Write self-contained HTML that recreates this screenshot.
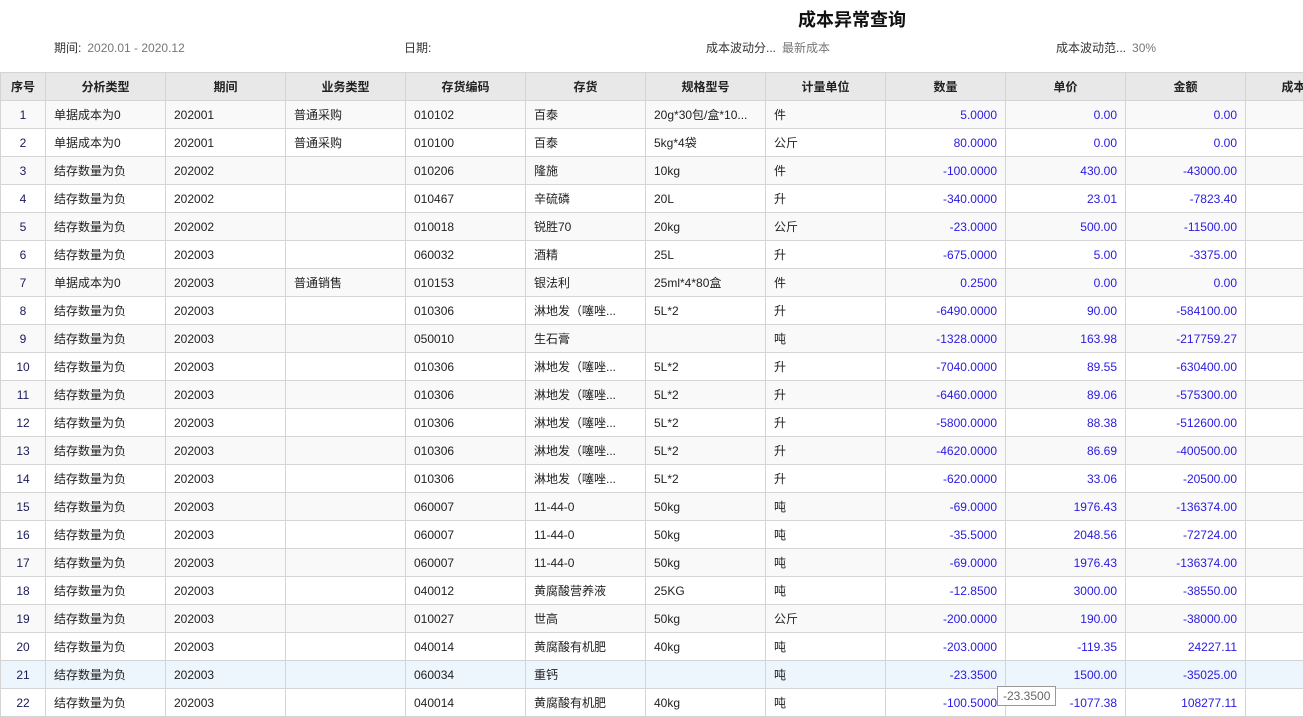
<!DOCTYPE html>
<html><head><meta charset="utf-8"><style>
body{margin:0;width:1303px;height:706px;overflow:hidden;background:#fff;font-family:"Liberation Sans","Noto Sans CJK SC",sans-serif;font-size:12px;color:#222;position:relative}
.t{position:absolute;left:798px;top:6px;font-size:18px;font-weight:bold;color:#111}
.f{position:absolute;top:39px;font-size:12px;color:#333}
.f span{color:#777;margin-left:6px}
table{position:absolute;left:0;top:72px;border-collapse:collapse;table-layout:fixed;width:1365px}
td,th{border:1px solid #d4d4d4;height:27px;padding:0 8px;white-space:nowrap;overflow:hidden;text-overflow:ellipsis}
th{background:#e8e8e8;font-weight:bold;font-size:12px;color:#222}
tr:nth-child(even) td{background:#f9f9f9}
tr.h td{background:#edf5fd!important}
td.c{text-align:center;padding:0;color:#1a1a5a}
td.n{text-align:right;color:#2a1ae0}
.tip{position:absolute;left:997px;top:686px;border:1px solid #999;background:#fff;color:#666;padding:2px 5px;font-size:12px}
</style></head><body>
<div class="t">成本异常查询</div>
<div class="f" style="left:54px">期间:<span>2020.01 - 2020.12</span></div>
<div class="f" style="left:404px">日期:</div>
<div class="f" style="left:706px">成本波动分...<span>最新成本</span></div>
<div class="f" style="left:1056px">成本波动范...<span>30%</span></div>
<table>
<colgroup><col style="width:45px"><col style="width:120px"><col style="width:120px"><col style="width:120px"><col style="width:120px"><col style="width:120px"><col style="width:120px"><col style="width:120px"><col style="width:120px"><col style="width:120px"><col style="width:120px"><col style="width:120px"></colgroup>
<tr><th>序号</th><th>分析类型</th><th>期间</th><th>业务类型</th><th>存货编码</th><th>存货</th><th>规格型号</th><th>计量单位</th><th>数量</th><th>单价</th><th>金额</th><th>成本波动</th></tr>
<tr><td class="c">1</td><td>单据成本为0</td><td>202001</td><td>普通采购</td><td>010102</td><td>百泰</td><td>20g*30包/盒*10...</td><td>件</td><td class="n">5.0000</td><td class="n">0.00</td><td class="n">0.00</td><td></td></tr>
<tr><td class="c">2</td><td>单据成本为0</td><td>202001</td><td>普通采购</td><td>010100</td><td>百泰</td><td>5kg*4袋</td><td>公斤</td><td class="n">80.0000</td><td class="n">0.00</td><td class="n">0.00</td><td></td></tr>
<tr><td class="c">3</td><td>结存数量为负</td><td>202002</td><td></td><td>010206</td><td>隆施</td><td>10kg</td><td>件</td><td class="n">-100.0000</td><td class="n">430.00</td><td class="n">-43000.00</td><td></td></tr>
<tr><td class="c">4</td><td>结存数量为负</td><td>202002</td><td></td><td>010467</td><td>辛硫磷</td><td>20L</td><td>升</td><td class="n">-340.0000</td><td class="n">23.01</td><td class="n">-7823.40</td><td></td></tr>
<tr><td class="c">5</td><td>结存数量为负</td><td>202002</td><td></td><td>010018</td><td>锐胜70</td><td>20kg</td><td>公斤</td><td class="n">-23.0000</td><td class="n">500.00</td><td class="n">-11500.00</td><td></td></tr>
<tr><td class="c">6</td><td>结存数量为负</td><td>202003</td><td></td><td>060032</td><td>酒精</td><td>25L</td><td>升</td><td class="n">-675.0000</td><td class="n">5.00</td><td class="n">-3375.00</td><td></td></tr>
<tr><td class="c">7</td><td>单据成本为0</td><td>202003</td><td>普通销售</td><td>010153</td><td>银法利</td><td>25ml*4*80盒</td><td>件</td><td class="n">0.2500</td><td class="n">0.00</td><td class="n">0.00</td><td></td></tr>
<tr><td class="c">8</td><td>结存数量为负</td><td>202003</td><td></td><td>010306</td><td>淋地发（噻唑...</td><td>5L*2</td><td>升</td><td class="n">-6490.0000</td><td class="n">90.00</td><td class="n">-584100.00</td><td></td></tr>
<tr><td class="c">9</td><td>结存数量为负</td><td>202003</td><td></td><td>050010</td><td>生石膏</td><td></td><td>吨</td><td class="n">-1328.0000</td><td class="n">163.98</td><td class="n">-217759.27</td><td></td></tr>
<tr><td class="c">10</td><td>结存数量为负</td><td>202003</td><td></td><td>010306</td><td>淋地发（噻唑...</td><td>5L*2</td><td>升</td><td class="n">-7040.0000</td><td class="n">89.55</td><td class="n">-630400.00</td><td></td></tr>
<tr><td class="c">11</td><td>结存数量为负</td><td>202003</td><td></td><td>010306</td><td>淋地发（噻唑...</td><td>5L*2</td><td>升</td><td class="n">-6460.0000</td><td class="n">89.06</td><td class="n">-575300.00</td><td></td></tr>
<tr><td class="c">12</td><td>结存数量为负</td><td>202003</td><td></td><td>010306</td><td>淋地发（噻唑...</td><td>5L*2</td><td>升</td><td class="n">-5800.0000</td><td class="n">88.38</td><td class="n">-512600.00</td><td></td></tr>
<tr><td class="c">13</td><td>结存数量为负</td><td>202003</td><td></td><td>010306</td><td>淋地发（噻唑...</td><td>5L*2</td><td>升</td><td class="n">-4620.0000</td><td class="n">86.69</td><td class="n">-400500.00</td><td></td></tr>
<tr><td class="c">14</td><td>结存数量为负</td><td>202003</td><td></td><td>010306</td><td>淋地发（噻唑...</td><td>5L*2</td><td>升</td><td class="n">-620.0000</td><td class="n">33.06</td><td class="n">-20500.00</td><td></td></tr>
<tr><td class="c">15</td><td>结存数量为负</td><td>202003</td><td></td><td>060007</td><td>11-44-0</td><td>50kg</td><td>吨</td><td class="n">-69.0000</td><td class="n">1976.43</td><td class="n">-136374.00</td><td></td></tr>
<tr><td class="c">16</td><td>结存数量为负</td><td>202003</td><td></td><td>060007</td><td>11-44-0</td><td>50kg</td><td>吨</td><td class="n">-35.5000</td><td class="n">2048.56</td><td class="n">-72724.00</td><td></td></tr>
<tr><td class="c">17</td><td>结存数量为负</td><td>202003</td><td></td><td>060007</td><td>11-44-0</td><td>50kg</td><td>吨</td><td class="n">-69.0000</td><td class="n">1976.43</td><td class="n">-136374.00</td><td></td></tr>
<tr><td class="c">18</td><td>结存数量为负</td><td>202003</td><td></td><td>040012</td><td>黄腐酸营养液</td><td>25KG</td><td>吨</td><td class="n">-12.8500</td><td class="n">3000.00</td><td class="n">-38550.00</td><td></td></tr>
<tr><td class="c">19</td><td>结存数量为负</td><td>202003</td><td></td><td>010027</td><td>世高</td><td>50kg</td><td>公斤</td><td class="n">-200.0000</td><td class="n">190.00</td><td class="n">-38000.00</td><td></td></tr>
<tr><td class="c">20</td><td>结存数量为负</td><td>202003</td><td></td><td>040014</td><td>黄腐酸有机肥</td><td>40kg</td><td>吨</td><td class="n">-203.0000</td><td class="n">-119.35</td><td class="n">24227.11</td><td></td></tr>
<tr class="h"><td class="c">21</td><td>结存数量为负</td><td>202003</td><td></td><td>060034</td><td>重钙</td><td></td><td>吨</td><td class="n">-23.3500</td><td class="n">1500.00</td><td class="n">-35025.00</td><td></td></tr>
<tr><td class="c">22</td><td>结存数量为负</td><td>202003</td><td></td><td>040014</td><td>黄腐酸有机肥</td><td>40kg</td><td>吨</td><td class="n">-100.5000</td><td class="n">-1077.38</td><td class="n">108277.11</td><td></td></tr>
</table>
<div class="tip">-23.3500</div>
</body></html>
